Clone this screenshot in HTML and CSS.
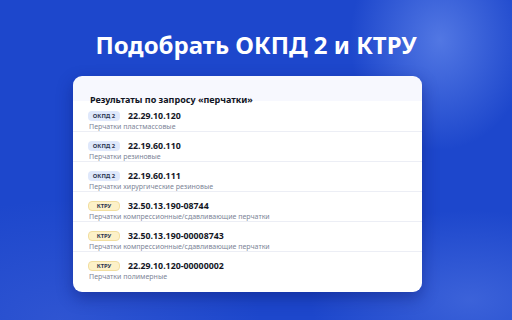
FILE: index.html
```html
<!DOCTYPE html>
<html lang="ru">
<head>
<meta charset="utf-8">
<link rel="stylesheet" href="styles.css">
</head>
<body>
<main class="page">
  <h1 class="title">Подобрать ОКПД 2 и КТРУ</h1>
  <section class="card">
    <div class="card-head">Результаты по запросу «перчатки»</div>
    <ul class="list">
      <li class="row">
        <div class="row-top"><span class="badge badge-okpd">ОКПД 2</span><span class="code">22.29.10.120</span></div>
        <div class="desc">Перчатки пластмассовые</div>
      </li>
      <li class="row">
        <div class="row-top"><span class="badge badge-okpd">ОКПД 2</span><span class="code">22.19.60.110</span></div>
        <div class="desc">Перчатки резиновые</div>
      </li>
      <li class="row">
        <div class="row-top"><span class="badge badge-okpd">ОКПД 2</span><span class="code">22.19.60.111</span></div>
        <div class="desc">Перчатки хирургические резиновые</div>
      </li>
      <li class="row">
        <div class="row-top"><span class="badge badge-ktru">КТРУ</span><span class="code">32.50.13.190-08744</span></div>
        <div class="desc">Перчатки компрессионные/сдавливающие перчатки</div>
      </li>
      <li class="row">
        <div class="row-top"><span class="badge badge-ktru">КТРУ</span><span class="code">32.50.13.190-00008743</span></div>
        <div class="desc">Перчатки компрессионные/сдавливающие перчатки</div>
      </li>
      <li class="row">
        <div class="row-top"><span class="badge badge-ktru">КТРУ</span><span class="code">22.29.10.120-00000002</span></div>
        <div class="desc">Перчатки полимерные</div>
      </li>
    </ul>
  </section>
</main>
</body>
</html>
```
FILE: styles.css
```css
html, body {
  margin: 0;
  padding: 0;
}
body {
  width: 512px;
  height: 320px;
  overflow: hidden;
  font-family: "Noto Sans", "Open Sans", sans-serif;
  background:
    radial-gradient(ellipse 90px 110px at 440px 40px, rgba(110,145,240,0.65), rgba(110,145,240,0) 100%),
    radial-gradient(ellipse 160px 90px at 470px 300px, rgba(90,125,230,0.5), rgba(90,125,230,0) 100%),
    radial-gradient(ellipse 200px 120px at 60px 320px, rgba(80,110,220,0.35), rgba(80,110,220,0) 100%),
    #1d47cc;
}
.page {
  display: flex;
  flex-direction: column;
  align-items: center;
}
.title {
  margin: 30px 0 0;
  font-size: 24px;
  line-height: 30px;
  font-weight: 700;
  color: #fff;
}
.card {
  margin-top: 16px;
  margin-right: 17px;
  width: 349px;
  border-radius: 9px;
  background: linear-gradient(#f7f8fe 0 25px, #fff 25px);
  box-shadow: 0 6px 16px rgba(10, 25, 110, 0.45);
  overflow: hidden;
}
.card-head {
  padding: 18px 17px 0;
  height: 8px;
  font-size: 9px;
  line-height: 11px;
  font-weight: 700;
  color: #111524;
}
.list {
  list-style: none;
  margin: 0;
  padding: 0 0 11px;
}
.row {
  padding: 7px 15px 0;
  height: 22px;
  border-bottom: 1px solid #eceef5;
}
.row:last-child {
  border-bottom: none;
}
.row-top {
  display: flex;
  align-items: center;
  height: 13px;
  gap: 8px;
}
.badge {
  box-sizing: border-box;
  width: 32px;
  height: 10px;
  border-radius: 4px;
  display: flex;
  align-items: center;
  justify-content: center;
  font-size: 5.8px;
  font-weight: 700;
  color: #2b3450;
}
.badge-okpd {
  background: #dfe8fb;
}
.badge-ktru {
  background: #fdf1c8;
  border: 1px solid #f1dea0;
}
.code {
  font-size: 8.8px;
  font-weight: 700;
  color: #14161f;
}
.desc {
  padding-left: 1px;
  font-size: 7px;
  line-height: 10px;
  color: #7d8597;
}
```
